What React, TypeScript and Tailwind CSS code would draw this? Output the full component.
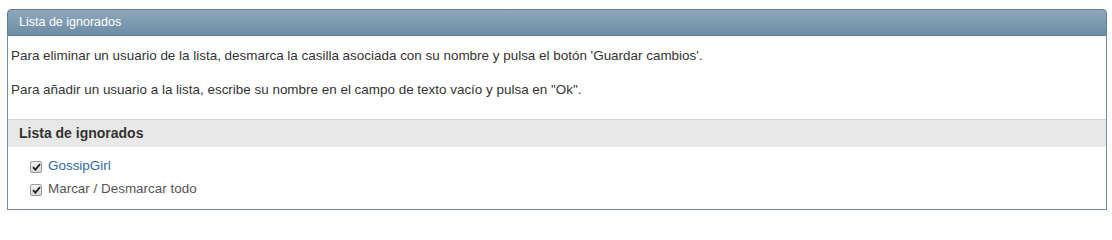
import React, { useState } from 'react';

const CheckBox: React.FC<{ checked: boolean; onChange: () => void }> = ({ checked, onChange }) => (
    <button
        type="button"
        onClick={onChange}
        className="w-[12px] h-[12px] border border-[#9a9a9a] rounded-[2px] bg-gradient-to-b from-[#f2f2f2] to-[#d6d6d6] flex items-center justify-center shrink-0"
    >
        {checked && (
            <svg width="9" height="8" viewBox="0 0 9 8">
                <path d="M1 4.2 L3.4 6.6 L8 1.2" fill="none" stroke="#222" strokeWidth="1.8" />
            </svg>
        )}
    </button>
);

const App: React.FC = () => {
    const [users, setUsers] = useState([{ name: 'GossipGirl', checked: true }]);
    const allChecked = users.every(u => u.checked);

    const toggleUser = (i: number) => {
        setUsers(prev => prev.map((u, idx) => (idx === i ? { ...u, checked: !u.checked } : u)));
    };

    const toggleAll = () => {
        setUsers(prev => prev.map(u => ({ ...u, checked: !allChecked })));
    };

    return (
        <div className="pt-[9px] pl-[7px] bg-white font-['Liberation_Sans',Arial,sans-serif]">
            <div className="w-[1100px]">
                {/* barra de título */}
                <div className="h-[27px] rounded-t-[4px] border border-[#5f7f98] bg-gradient-to-b from-[#8da8bb] to-[#6c8da6] flex items-center pl-[11px]">
                    <span className="text-[12.5px] text-white">Lista de ignorados</span>
                </div>

                <div className="border-x border-b border-[#6d8fa8] bg-white">
                    <div className="pt-[11px] pb-[20px] pl-[3px] text-[13.45px] text-[#333] leading-[18px]">
                        <p>Para eliminar un usuario de la lista, desmarca la casilla asociada con su nombre y pulsa el botón 'Guardar cambios'.</p>
                        <p className="mt-[16px]">Para añadir un usuario a la lista, escribe su nombre en el campo de texto vacío y pulsa en "Ok".</p>
                    </div>

                    <div className="h-[28px] border-t border-[#d4d4d4] bg-[#e8e8e8] flex items-center pl-[11px]">
                        <h3 className="text-[14px] font-bold text-[#333]">Lista de ignorados</h3>
                    </div>

                    <ul className="pt-[8px] pb-[8px] pl-[22px] text-[13.45px]">
                        {users.map((u, i) => (
                            <li key={u.name} className="h-[23px] flex items-center gap-[6px]">
                                <CheckBox checked={u.checked} onChange={() => toggleUser(i)} />
                                <a href="#" className="text-[#2b6aa8]">{u.name}</a>
                            </li>
                        ))}
                        <li className="h-[23px] flex items-center gap-[6px]">
                            <CheckBox checked={allChecked} onChange={toggleAll} />
                            <span className="text-[#555]">Marcar / Desmarcar todo</span>
                        </li>
                    </ul>
                </div>
            </div>
        </div>
    );
};

export default App;
